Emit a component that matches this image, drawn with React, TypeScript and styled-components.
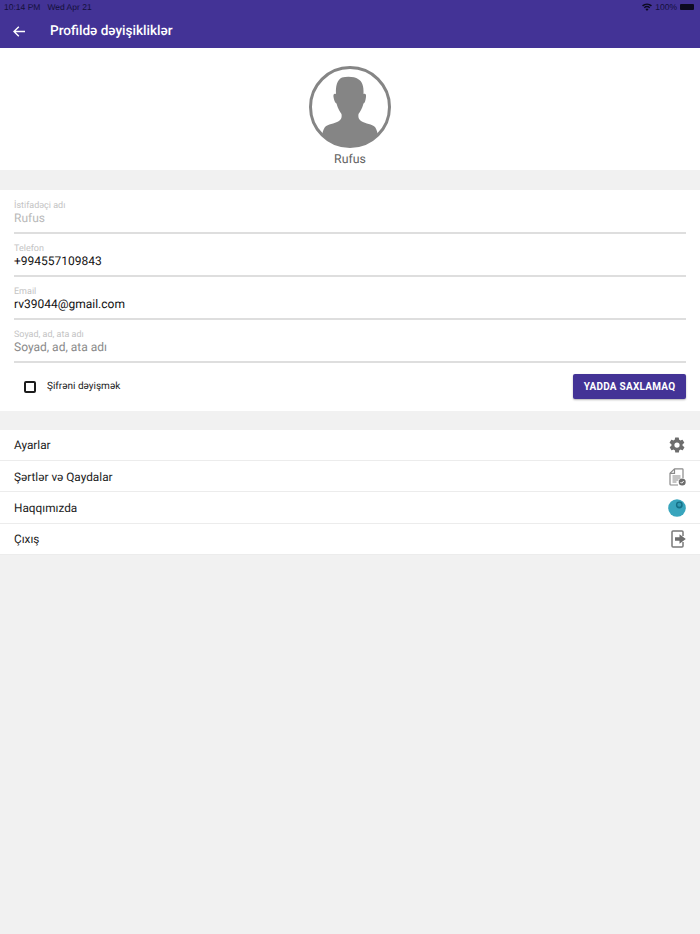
import React from "react";
import styled, { createGlobalStyle } from "styled-components";

const Global = createGlobalStyle`
  html, body { margin: 0; padding: 0; background: #f1f1f1; }
  body { font-family: Roboto, "Noto Sans", sans-serif; text-rendering: geometricPrecision; }
  * { box-sizing: border-box; }
`;

const Page = styled.div`
  width: 700px;
  height: 934px;
  background: #f1f1f1;
  display: flex;
  flex-direction: column;
  overflow: hidden;
`;

const Header = styled.header`
  height: 48px;
  background: #433396;
  display: flex;
  flex-direction: column;
`;

const StatusBar = styled.div`
  height: 14px;
  padding: 0 6px 0 4px;
  display: flex;
  align-items: center;
  justify-content: space-between;
  color: #14103a;
  font-size: 8.5px;
  font-family: "Liberation Sans", sans-serif;
`;

const StatusGroup = styled.div<{ $gap: number }>`
  display: flex;
  align-items: center;
  gap: ${(p) => p.$gap}px;
`;

const Battery = styled.span`
  width: 14px;
  height: 6px;
  background: #0c0a20;
  border-radius: 1px;
`;

const TitleBar = styled.div`
  flex: 1;
  display: flex;
  align-items: center;
  padding-left: 13px;
  gap: 25px;
  color: #fff;
`;

const Title = styled.h1`
  margin: 0;
  font-size: 13.6px;
  font-weight: 500;
`;

const ProfileCard = styled.section`
  height: 122px;
  margin-bottom: 20px;
  background: #fff;
  display: flex;
  flex-direction: column;
  align-items: center;
  padding-top: 18px;
`;

const ProfileName = styled.div`
  margin-top: 4px;
  font-size: 12.3px;
  line-height: 17px;
  color: #616161;
`;

const FormCard = styled.section`
  height: 221px;
  margin-bottom: 19px;
  background: #fff;
  padding: 0 14px;
`;

const Field = styled.div`
  height: 43px;
  padding-top: 10px;
  border-bottom: 2px solid #dedede;
`;

const FirstField = styled(Field)`
  height: 44px;
  padding-top: 11px;
`;

const FieldLabel = styled.div`
  font-size: 9px;
  line-height: 10px;
  color: #c4c4c4;
`;

const FieldValue = styled.div<{ $tone: "dark" | "muted" | "disabled" }>`
  font-size: 12px;
  line-height: 15px;
  color: ${(p) =>
    p.$tone === "dark" ? "#111" : p.$tone === "muted" ? "#8a8a8a" : "#b8b8b8"};
`;

const ActionRow = styled.div`
  height: 47px;
  display: flex;
  align-items: center;
  justify-content: space-between;
  padding-left: 10px;
`;

const CheckLabel = styled.label`
  display: flex;
  align-items: center;
  gap: 11px;
  font-size: 10px;
  line-height: 14px;
  color: #222;
`;

const CheckBox = styled.span`
  width: 12px;
  height: 12px;
  border: 2px solid #1c1c1c;
  border-radius: 2px;
`;

const SaveButton = styled.button`
  width: 113px;
  height: 25px;
  padding: 0;
  border: none;
  border-radius: 2px;
  background: #433396;
  color: #fff;
  font-family: inherit;
  font-size: 10px;
  font-weight: 700;
  letter-spacing: 0.25px;
  box-shadow: 0 1px 2px rgba(0, 0, 0, 0.3);
`;

const MenuCard = styled.section`
  background: #fff;
`;

const MenuRow = styled.div`
  height: 31.2px;
  padding: 0.5px 14px 0;
  display: flex;
  align-items: center;
  justify-content: space-between;
  border-bottom: 1.5px solid #ececec;
  font-size: 11.8px;
  color: #222;
`;

const Back = () => (
  <svg width="12" height="11" viewBox="0 0 12 11" fill="none" stroke="#fff" strokeWidth="1.4">
    <path d="M12 5.500H1M5.800.7 1 5.500l4.800 4.800" />
  </svg>
);

const Wifi = () => (
  <svg width="10" height="8" viewBox="0 0 10 8" fill="#0c0a20">
    <path d="M5 8 3.400 6.100a2.500 2.500 0 0 1 3.200 0zM2.700 5.200 1.800 4.200a5 5 0 0 1 6.400 0l-.9 1a3.600 3.600 0 0 0-4.600 0zM1.100 3.400 0 2.300a7.600 7.600 0 0 1 10 0L8.900 3.400a6.100 6.100 0 0 0-7.800 0z" />
  </svg>
);

const Avatar = () => (
  <svg width="82" height="82" viewBox="0 0 82 82">
    <defs>
      <clipPath id="avatarClip">
        <circle cx="41" cy="41" r="39" />
      </clipPath>
    </defs>
    <circle cx="41" cy="41" r="39.500" fill="#fff" stroke="#858585" strokeWidth="3" />
    <path
      clipPath="url(#avatarClip)"
      fill="#858585"
      d="M33 11.500C38 10 46 10.500 49 13C53 15 55 20 54.500 28C56 27 57.500 28 57 31C56.500 34 56 37 54.500 37.500C53 43 51 46 49.500 48C49 51 49.500 53 52 55C57 58 63 58 66 61C68 64 70 70 70 80L12 80C12 70 14 64 16 61C19 58 25 58 30 55C32.500 53 33 51 32.500 48C31 46 29 43 27.500 37.500C26 37 25 34 24.500 31C24 28 25.500 27 27 28C26.500 20 28 14 33 11.500Z"
    />
  </svg>
);

const GearIcon = () => (
  <svg width="18" height="18" viewBox="0 0 24 24" fill="#6d6d6d">
    <path d="M19.400 13a7.500 7.500 0 0 0 0-2l2.100-1.600a.5.500 0 0 0 .1-.6l-2-3.500a.5.500 0 0 0-.6-.2l-2.500 1a7.300 7.300 0 0 0-1.700-1l-.4-2.700a.5.500 0 0 0-.5-.4h-4a.5.500 0 0 0-.5.400l-.4 2.700a7.300 7.300 0 0 0-1.700 1l-2.500-1a.5.500 0 0 0-.6.200l-2 3.500a.5.500 0 0 0 .1.600L4.600 11a7.500 7.500 0 0 0 0 2l-2.100 1.600a.5.500 0 0 0-.1.600l2 3.500c.1.200.4.300.6.200l2.500-1c.5.400 1.100.7 1.700 1l.4 2.700c0 .2.200.4.500.4h4c.3 0 .5-.2.500-.4l.4-2.700c.6-.3 1.200-.6 1.700-1l2.500 1c.2.100.5 0 .6-.2l2-3.500a.5.500 0 0 0-.1-.6zM12 15.500a3.500 3.500 0 1 1 0-7 3.500 3.500 0 0 1 0 7z" />
  </svg>
);

const DocIcon = () => (
  <svg width="17" height="18" viewBox="0 0 17 18" fill="none" stroke="#8a8a8a" strokeWidth="1.200">
    <path d="M5.500.8h7.700a.8.800 0 0 1 .8.800V10M5.500.8 1 5.300v10.900c0 .5.300.8.800.8H9" />
    <path d="M5.500.8v4.500H1" />
    <path d="M3.500 8h8M3.500 10h8M3.500 12h6M3.500 14h4" />
    <circle cx="13.200" cy="14" r="3.500" fill="#6d6d6d" stroke="none" />
    <path d="m11.500 14 1.200 1.200 2-2.200" stroke="#fff" strokeWidth="1" />
  </svg>
);

const OrbIcon = () => (
  <svg width="18" height="18" viewBox="0 0 18 18">
    <circle cx="9" cy="9" r="8.800" fill="#38a5bd" />
    <circle cx="11.300" cy="6" r="3.400" fill="#146f86" />
    <circle cx="11.300" cy="5.700" r="2" fill="#2f9bb4" />
  </svg>
);

const ExitIcon = () => (
  <svg width="15" height="18" viewBox="0 0 15 18" fill="none">
    <path d="M12 6V2a1 1 0 0 0-1-1H2a1 1 0 0 0-1 1v14a1 1 0 0 0 1 1h9a1 1 0 0 0 1-1v-4" stroke="#7a7a7a" strokeWidth="1.500" />
    <path d="M4 7.200h4.500V4.300L14.800 9l-6.300 4.700v-2.900H4z" fill="#6d6d6d" />
  </svg>
);

const fields = [
  { label: "Telefon", value: "+994557109843", tone: "dark" as const },
  { label: "Email", value: "rv39044@gmail.com", tone: "dark" as const },
  { label: "Soyad, ad, ata adı", value: "Soyad, ad, ata adı", tone: "muted" as const },
];

const menu = [
  { label: "Ayarlar", icon: <GearIcon /> },
  { label: "Şərtlər və Qaydalar", icon: <DocIcon /> },
  { label: "Haqqımızda", icon: <OrbIcon /> },
  { label: "Çıxış", icon: <ExitIcon /> },
];

export default function App() {
  return (
    <Page>
      <Global />
      <Header>
        <StatusBar>
          <StatusGroup $gap={7}>
            <span>10:14 PM</span>
            <span>Wed Apr 21</span>
          </StatusGroup>
          <StatusGroup $gap={3}>
            <Wifi />
            <span>100%</span>
            <Battery />
          </StatusGroup>
        </StatusBar>
        <TitleBar>
          <Back />
          <Title>Profildə dəyişikliklər</Title>
        </TitleBar>
      </Header>
      <ProfileCard>
        <Avatar />
        <ProfileName>Rufus</ProfileName>
      </ProfileCard>
      <FormCard>
        <FirstField>
          <FieldLabel>İstifadəçi adı</FieldLabel>
          <FieldValue $tone="disabled">Rufus</FieldValue>
        </FirstField>
        {fields.map((f) => (
          <Field key={f.label}>
            <FieldLabel>{f.label}</FieldLabel>
            <FieldValue $tone={f.tone}>{f.value}</FieldValue>
          </Field>
        ))}
        <ActionRow>
          <CheckLabel>
            <CheckBox />
            Şifrəni dəyişmək
          </CheckLabel>
          <SaveButton>YADDA SAXLAMAQ</SaveButton>
        </ActionRow>
      </FormCard>
      <MenuCard>
        {menu.map((m) => (
          <MenuRow key={m.label}>
            {m.label}
            {m.icon}
          </MenuRow>
        ))}
      </MenuCard>
    </Page>
  );
}
